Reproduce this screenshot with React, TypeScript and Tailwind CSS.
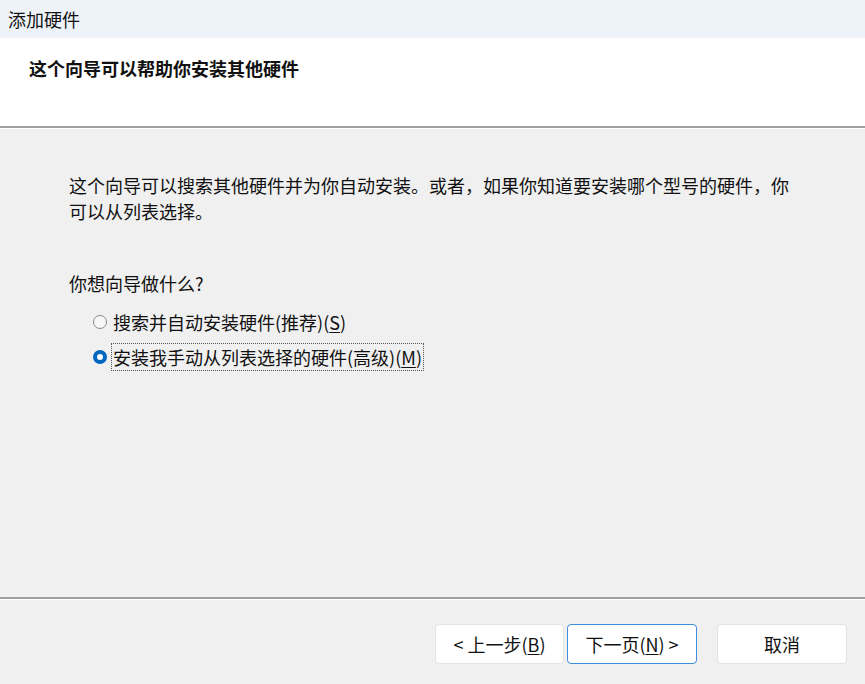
import React from "react";

const font = { fontFamily: '"Noto Sans CJK SC", "Noto Sans", sans-serif' };

function Radio({ checked }: { checked: boolean }) {
  if (checked) {
    return (
      <span className="w-[14px] h-[14px] rounded-full bg-[#0067c0] flex items-center justify-center shrink-0">
        <span className="w-[6px] h-[6px] rounded-full bg-white" />
      </span>
    );
  }
  return <span className="w-[14px] h-[14px] rounded-full border border-[#8a8a8a] bg-[#f7f7f7] shrink-0" />;
}

export default function App() {
  return (
    <div
      className="w-[865px] h-[684px] flex flex-col text-[18px] leading-[26px] text-[#111] overflow-hidden"
      style={font}
    >
      <div className="h-[38px] shrink-0 bg-[#eef3f9] pl-[8px] flex items-center">添加硬件</div>
      <div className="h-[88px] shrink-0 bg-white pl-[29px] pt-[17px] font-bold">这个向导可以帮助你安装其他硬件</div>
      <div className="h-[2px] shrink-0 bg-[#a0a0a0]" />
      <div className="h-px shrink-0 bg-white" />
      <div className="flex-1 bg-[#f0f0f0] flex flex-col">
        <div className="flex-1 pl-[69px] pr-[60px] pt-[43px]">
          <p className="w-[728px]">
            这个向导可以搜索其他硬件并为你自动安装。或者，如果你知道要安装哪个型号的硬件，你可以从列表选择。
          </p>
          <p className="mt-[46px]">你想向导做什么?</p>
          <div className="mt-[13px] pl-[24px] flex flex-col gap-[9px]">
            <div className="flex items-center h-[26px]">
              <Radio checked={false} />
              <span className="ml-[4px] px-px border border-transparent">
                搜索并自动安装硬件(推荐)(<span className="underline underline-offset-2">S</span>)
              </span>
            </div>
            <div className="flex items-center h-[26px]">
              <Radio checked={true} />
              <span className="ml-[4px] px-px border border-dotted border-[#555]">
                安装我手动从列表选择的硬件(高级)(<span className="underline underline-offset-2">M</span>)
              </span>
            </div>
          </div>
        </div>
        <div className="h-[2px] shrink-0 bg-[#a0a0a0]" />
        <div className="h-px shrink-0 bg-white" />
        <div className="h-[84px] shrink-0 flex items-start pt-[24px] pl-[435px]">
          <button className="w-[129px] h-[40px] bg-white border border-[#e3e3e3] rounded-[4px] text-[18px]" style={font}>
            &lt; 上一步(<span className="underline underline-offset-2">B</span>)
          </button>
          <button className="ml-[3px] w-[130px] h-[40px] bg-white border border-[#3d8ee0] rounded-[4px] text-[18px]" style={font}>
            下一页(<span className="underline underline-offset-2">N</span>) &gt;
          </button>
          <button className="ml-[20px] w-[130px] h-[40px] bg-white border border-[#e3e3e3] rounded-[4px] text-[18px]" style={font}>
            取消
          </button>
        </div>
      </div>
    </div>
  );
}
